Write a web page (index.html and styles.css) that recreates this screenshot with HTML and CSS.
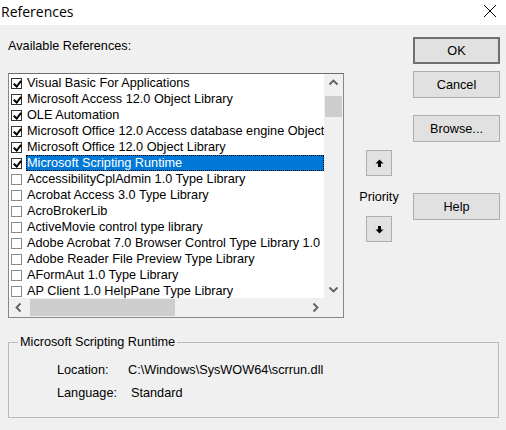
FILE: index.html
```html
<!DOCTYPE html>
<html>
<head>
<meta charset="utf-8">
<link rel="stylesheet" href="styles.css">
</head>
<body>
<div class="window">
  <div class="titlebar">
    <span class="title">References</span>
    <svg class="close" width="14" height="14" viewBox="0 0 14 14"><path d="M1 1 L13 13 M13 1 L1 13" stroke="#000" stroke-width="1" fill="none"/></svg>
  </div>
  <div class="main">
    <div class="leftcol">
      <div class="label">Available References:</div>
      <div class="listbox">
        <div class="rows">
          <div class="row"><span class="cb on"></span><span class="txt">Visual Basic For Applications</span></div>
          <div class="row"><span class="cb on"></span><span class="txt">Microsoft Access 12.0 Object Library</span></div>
          <div class="row"><span class="cb on"></span><span class="txt">OLE Automation</span></div>
          <div class="row"><span class="cb on"></span><span class="txt">Microsoft Office 12.0 Access database engine Object Library</span></div>
          <div class="row"><span class="cb on"></span><span class="txt">Microsoft Office 12.0 Object Library</span></div>
          <div class="row sel"><span class="cb on"></span><span class="txt">Microsoft Scripting Runtime</span></div>
          <div class="row"><span class="cb"></span><span class="txt">AccessibilityCplAdmin 1.0 Type Library</span></div>
          <div class="row"><span class="cb"></span><span class="txt">Acrobat Access 3.0 Type Library</span></div>
          <div class="row"><span class="cb"></span><span class="txt">AcroBrokerLib</span></div>
          <div class="row"><span class="cb"></span><span class="txt">ActiveMovie control type library</span></div>
          <div class="row"><span class="cb"></span><span class="txt">Adobe Acrobat 7.0 Browser Control Type Library 1.0</span></div>
          <div class="row"><span class="cb"></span><span class="txt">Adobe Reader File Preview Type Library</span></div>
          <div class="row"><span class="cb"></span><span class="txt">AFormAut 1.0 Type Library</span></div>
          <div class="row"><span class="cb"></span><span class="txt">AP Client 1.0 HelpPane Type Library</span></div>
        </div>
        <div class="vscroll">
          <svg class="arr" width="17" height="17" viewBox="0 0 17 17"><path d="M4.5 10.5 L8.5 6.5 L12.5 10.5" stroke="#606060" stroke-width="1.8" fill="none"/></svg>
          <div class="vthumb"></div>
          <div class="vtrack"></div>
          <svg class="arr" width="17" height="17" viewBox="0 0 17 17"><path d="M4.5 6.5 L8.5 10.5 L12.5 6.5" stroke="#606060" stroke-width="1.8" fill="none"/></svg>
        </div>
        <div class="hscroll">
          <svg class="arr" width="17" height="17" viewBox="0 0 17 17"><path d="M10.5 4.5 L6.5 8.5 L10.5 12.5" stroke="#606060" stroke-width="1.8" fill="none"/></svg>
          <div class="hthumb"></div>
          <div class="htrack"></div>
          <svg class="arr" width="17" height="17" viewBox="0 0 17 17"><path d="M6.5 4.5 L10.5 8.5 L6.5 12.5" stroke="#606060" stroke-width="1.8" fill="none"/></svg>
        </div>
        <div class="corner"></div>
      </div>
    </div>
    <div class="midcol">
      <button class="btn small up"><svg width="9" height="9" viewBox="0 0 9 9"><path d="M4.5 0.5 L8.5 4.5 L6 4.5 L6 8 L3 8 L3 4.5 L0.5 4.5 Z" fill="#000"/></svg></button>
      <div class="priority">Priority</div>
      <button class="btn small"><svg width="9" height="9" viewBox="0 0 9 9"><path d="M4.5 8.5 L8.5 4.5 L6 4.5 L6 1 L3 1 L3 4.5 L0.5 4.5 Z" fill="#000"/></svg></button>
    </div>
    <div class="rightcol">
      <button class="btn big default">OK</button>
      <button class="btn big cancel">Cancel</button>
      <button class="btn big browse">Browse...</button>
      <button class="btn big help">Help</button>
    </div>
  </div>
  <div class="group">
    <div class="legend">Microsoft Scripting Runtime</div>
    <div class="info">
      <div class="inforow"><span class="k">Location:</span><span class="v">C:\Windows\SysWOW64\scrrun.dll</span></div>
      <div class="inforow"><span class="k">Language:</span><span class="v v2">Standard</span></div>
    </div>
  </div>
</div>
</body>
</html>
```

FILE: styles.css
```css
* { box-sizing: border-box; }
html, body { margin: 0; padding: 0; }
body {
  width: 506px;
  height: 430px;
  background: #f0f0f0;
  font-family: "Liberation Sans", Arial, sans-serif;
  font-size: 12.7px;
  color: #000;
  overflow: hidden;
}
.window { width: 506px; height: 430px; background: #f0f0f0; }
.titlebar {
  height: 25px;
  background: #fff;
  display: flex;
  align-items: center;
  justify-content: space-between;
  padding: 0 9px 2px 1px;
}
.title { font-family: "Open Sans", "Liberation Sans", sans-serif; font-size: 14px; }
.close { display: block; margin-top: -2px; }
.main {
  display: flex;
  padding-left: 8px;
  height: 293px;
}
.leftcol { width: 336px; }
.label { height: 14px; line-height: 14px; margin-top: 14px; }
.listbox {
  margin-top: 20px;
  width: 336px;
  height: 245px;
  border: 1px solid #828790;
  border-top-color: #6e6e6e;
  background: #fff;
  display: grid;
  grid-template-columns: 315px 19px;
  grid-template-rows: 224px 19px;
}
.rows { padding-top: 1px; overflow: hidden; }
.row {
  height: 16px;
  display: flex;
  align-items: center;
  white-space: nowrap;
  padding-left: 2px;
}
.cb {
  width: 11px;
  height: 11px;
  border: 1px solid #8a8a8a;
  background: #fff;
  flex: none;
  margin-right: 4px;
  position: relative;
}
.cb.on { border-color: #333; }
.cb.on::after {
  content: "";
  position: absolute;
  left: 3px;
  top: 0px;
  width: 3px;
  height: 6px;
  border-right: 2px solid #000;
  border-bottom: 2px solid #000;
  transform: rotate(40deg);
}
.txt { line-height: 16px; padding: 0 1px; }
.row.sel .txt {
  background: #0078d7;
  color: #fff;
  outline: 1px dotted #000;
  outline-offset: -1px;
  flex: 1;
}
.vscroll {
  background: #f0f0f0;
  display: flex;
  flex-direction: column;
  align-items: center;
}
.vscroll .arr { flex: none; }
.vthumb { width: 17px; height: 21px; background: #cdcdcd; margin-top: 5px; }
.vtrack { flex: 1; }
.hscroll {
  background: #f0f0f0;
  display: flex;
  align-items: center;
}
.hscroll .arr { flex: none; margin-left: 1px; }
.hthumb { width: 145px; height: 17px; background: #cdcdcd; margin-left: 3px; }
.htrack { flex: 1; }
.corner { background: #f0f0f0; }
.midcol {
  width: 69px;
  display: flex;
  flex-direction: column;
  align-items: center;
  padding-top: 125px;
  padding-left: 1px;
}
.btn {
  font-family: inherit;
  font-size: 12.7px;
  color: #000;
  background: #e1e1e1;
  border: 1px solid #adadad;
  padding: 0;
  display: flex;
  align-items: center;
  justify-content: center;
}
.btn.small { width: 26px; height: 26px; }
.priority { margin-top: 14px; margin-bottom: 12px; height: 14px; line-height: 14px; }
.rightcol {
  width: 87px;
  display: flex;
  flex-direction: column;
  padding-top: 12px;
}
.btn.big { width: 87px; height: 27px; }
.btn.default { border: 2px solid #6f6f6f; }
.cancel { margin-top: 7px; }
.browse { margin-top: 17px; }
.help { margin-top: 51px; }
.group {
  margin: 0 7px 0 8px;
  margin-top: 24px;
  height: 76px;
  border: 1px solid #b9b9b9;
  position: relative;
  padding: 16px 0 0 48px;
}
.legend {
  position: absolute;
  left: 9px;
  top: -8px;
  background: #f0f0f0;
  padding: 0 2px;
  line-height: 15px;
}
.inforow { height: 23px; line-height: 23px; display: flex; }
.k { width: 71px; }
.v2 { margin-left: 3px; }
```
